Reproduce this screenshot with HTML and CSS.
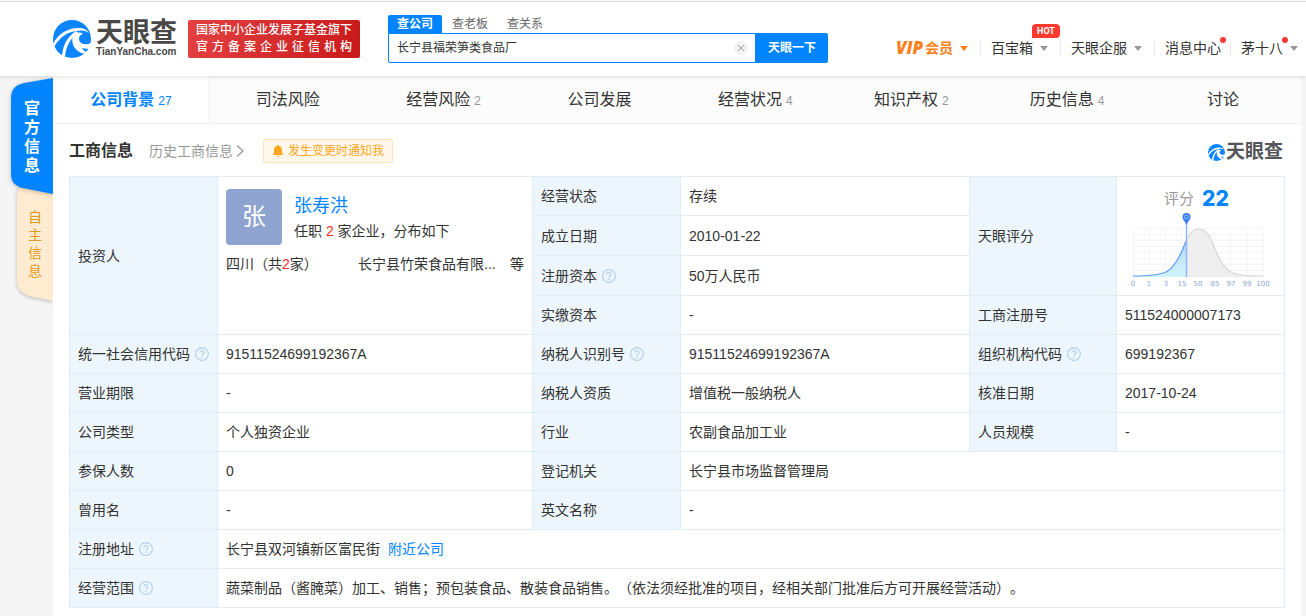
FILE: index.html
```html
<!DOCTYPE html>
<html lang="zh-CN">
<head>
<meta charset="utf-8">
<title>天眼查</title>
<link rel="stylesheet" href="styles.css">
</head>
<body>
<svg class="defs" width="0" height="0" aria-hidden="true">
  <symbol id="swirl" viewBox="0 0 38 38">
    <circle cx="19" cy="19" r="19" fill="#0a84ff"/>
    <path d="M0 24C5 14 14 8 26 8C31 8 34 10 36 13C32 10 28 10 24 11C14 12 7 17 1 27Z" fill="#fff"/>
    <path d="M9 36C10 25 14 17 23 11L25 13C17 19 13 26 12 37Z" fill="#fff"/>
    <path d="M20 15C23 12 27 12 30 14C26 15 25 19 27 22C30 25 35 25 39 22V28C36 29 32 29 29 28C30 30 32 32 35 32L33 34C24 33 17 26 20 15Z" fill="#fff"/>
  </symbol>
  <symbol id="help" viewBox="0 0 14 14">
    <circle cx="7" cy="7" r="6.4" fill="none" stroke="#b0d0ec" stroke-width="1.1"/>
    <path d="M5 5.6C5 3 9 3 9 5.5C9 7 7 7 7 8.6" fill="none" stroke="#b0d0ec" stroke-width="1.1"/>
    <circle cx="7" cy="10.4" r=".8" fill="#b0d0ec"/>
  </symbol>
</svg>

<header class="header">
  <a class="logo" href="#">
    <svg class="logo-mark"><use href="#swirl"/></svg>
    <span class="logo-words"><span class="logo-name">天眼查</span><span class="logo-site">TianYanCha.com</span></span>
  </a>
  <div class="cert"><p>国家中小企业发展子基金旗下</p><p class="cert-wide">官方备案企业征信机构</p></div>
  <form class="search">
    <div class="search-tabs">
      <button type="button" class="search-tab active">查公司</button>
      <button type="button" class="search-tab">查老板</button>
      <button type="button" class="search-tab">查关系</button>
    </div>
    <div class="search-row">
      <input class="search-input" type="text" aria-label="搜索" value="长宁县福荣笋类食品厂">
      <button type="button" class="search-clear" aria-label="清空"><svg viewBox="0 0 14 14"><circle cx="7" cy="7" r="7" fill="#f2f2f2"/><path d="M4 4l6 6M10 4l-6 6" stroke="#999"/></svg></button>
      <button type="submit" class="search-go">天眼一下</button>
    </div>
  </form>
  <nav class="nav">
    <a class="nav-item vip" href="#"><span class="vip-word">VIP</span>会员<i class="caret"></i></a>
    <a class="nav-item" href="#">百宝箱<i class="caret"></i><span class="hot">HOT</span></a>
    <a class="nav-item" href="#">天眼企服<i class="caret"></i></a>
    <a class="nav-item plain" href="#"><span class="dotted">消息中心</span></a>
    <a class="nav-item" href="#"><span class="dotted">茅十八</span><i class="caret"></i></a>
  </nav>
</header>

<div class="page">
  <aside class="side">
    <button class="side-tab official">
      <svg viewBox="0 0 42 116" preserveAspectRatio="none"><path d="M42 0L13 5C4 7 0 12 0 20V96C0 104 4 108 12 110L42 116Z" fill="#0084ff"/></svg>
      <span>官方信息</span>
    </button>
    <button class="side-tab own">
      <svg viewBox="0 0 36 120" preserveAspectRatio="none"><path d="M36 0H9C3 3 0 8 0 15V98C0 106 4 111 12 114L36 119Z" fill="#ffebcf"/></svg>
      <span>自主信息</span>
    </button>
  </aside>

  <main class="panel">
    <nav class="tabs">
      <a class="tab active" href="#">公司背景<small>27</small></a>
      <a class="tab" href="#">司法风险</a>
      <a class="tab" href="#">经营风险<small>2</small></a>
      <a class="tab" href="#">公司发展</a>
      <a class="tab" href="#">经营状况<small>4</small></a>
      <a class="tab" href="#">知识产权<small>2</small></a>
      <a class="tab" href="#">历史信息<small>4</small></a>
      <a class="tab" href="#">讨论</a>
    </nav>

    <section class="content">
      <div class="section-head">
        <h2>工商信息</h2>
        <a class="history" href="#">历史工商信息<svg viewBox="0 0 8 12"><path d="M1 0.5L7 6L1 11.5" fill="none" stroke="#999" stroke-width="1.3"/></svg></a>
        <button class="notify"><svg viewBox="0 0 12 12"><path d="M6 0C6.800 0 7 .5 7 1C9.200 1.500 10 3.200 10 5V8L11 9.500V10H1V9.500L2 8V5C2 3.200 2.800 1.500 5 1C5 .5 5.200 0 6 0ZM4.500 10.700H7.500C7.300 12.300 4.700 12.300 4.500 10.700Z" fill="#ffa51f"/></svg>发生变更时通知我</button>
        <div class="brand"><svg><use href="#swirl"/></svg><span>天眼查</span></div>
      </div>

      <table class="info">
        <colgroup><col class="c-label"><col class="c-first"><col class="c-label"><col><col class="c-third"><col class="c-last"></colgroup>
        <tr>
          <th rowspan="4">投资人</th>
          <td rowspan="4" class="investor">
            <div class="person">
              <div class="avatar">张</div>
              <div><a class="person-name" href="#">张寿洪</a><p>任职 <em>2</em> 家企业，分布如下</p></div>
            </div>
            <div class="firms"><span>四川（共<em>2</em>家）</span><span>长宁县竹荣食品有限...</span><span>等</span></div>
          </td>
          <th>经营状态</th><td>存续</td>
          <th rowspan="3">天眼评分</th>
          <td rowspan="3" class="score">
            <div class="score-head">评分<strong>22</strong></div>
            <svg class="chart" viewBox="0 0 144 78">
              <defs><linearGradient id="fill" x1="0" y1="0" x2="0" y2="1"><stop offset="0" stop-color="#b5d8fb"/><stop offset="1" stop-color="#d2f4fb"/></linearGradient></defs>
              <path d="M4 17.500H134M4 23.500H134M4 29.500H134M4 35.500H134M4 41.500H134M4 47.500H134M4 53.500H134M4 59.500H134M4.500 17V66M20.500 17V66M36.500 17V66M52.500 17V66M69.500 17V66M85.500 17V66M101.500 17V66M118.500 17V66M134.500 17V66" stroke="#f5f5f5" fill="none"/>
              <path d="M57 30C61 21 65 18 70 18C79 18 82 28 86 38C90 48 95 57 102 61C109 64.500 120 65 134 65V66H57Z" fill="#eee"/>
              <path d="M4 65C20 65 30 64 37 61C47 56 53 41 57 30V66H4Z" fill="url(#fill)"/>
              <path d="M57 30C61 21 65 18 70 18C79 18 82 28 86 38C90 48 95 57 102 61C109 64.500 120 65 134 65" fill="none" stroke="#d8d8d8" stroke-width="1.200"/>
              <path d="M4 65C20 65 30 64 37 61C47 56 53 41 57 30" fill="none" stroke="#5b9dfb" stroke-width="1.200"/>
              <path d="M57.500 12V66" stroke="#8cb4ff" stroke-width="1.400"/>
              <path d="M57.500 14C56 10 53.500 9 53.500 6A4 4 0 0 1 61.500 6C61.500 9 59 10 57.500 14Z" fill="#3f7bf5"/>
              <circle cx="57.500" cy="6" r="2" fill="#3f7bf5" stroke="#8fd0ff" stroke-width=".8"/>
              <g class="axis"><text x="4" y="75">0</text><text x="20" y="75">1</text><text x="37" y="75">3</text><text x="53" y="75">15</text><text x="69" y="75">50</text><text x="86" y="75">85</text><text x="102" y="75">97</text><text x="118" y="75">99</text><text x="134" y="75">100</text></g>
            </svg>
          </td>
        </tr>
        <tr class="tall"><th>成立日期</th><td>2010-01-22</td></tr>
        <tr class="tall"><th>注册资本<svg class="help"><use href="#help"/></svg></th><td>50万人民币</td></tr>
        <tr><th>实缴资本</th><td>-</td><th>工商注册号</th><td>511524000007173</td></tr>
        <tr><th>统一社会信用代码<svg class="help"><use href="#help"/></svg></th><td>91511524699192367A</td><th>纳税人识别号<svg class="help"><use href="#help"/></svg></th><td>91511524699192367A</td><th>组织机构代码<svg class="help"><use href="#help"/></svg></th><td>699192367</td></tr>
        <tr><th>营业期限</th><td>-</td><th>纳税人资质</th><td>增值税一般纳税人</td><th>核准日期</th><td>2017-10-24</td></tr>
        <tr><th>公司类型</th><td>个人独资企业</td><th>行业</th><td>农副食品加工业</td><th>人员规模</th><td>-</td></tr>
        <tr><th>参保人数</th><td>0</td><th>登记机关</th><td colspan="3">长宁县市场监督管理局</td></tr>
        <tr><th>曾用名</th><td>-</td><th>英文名称</th><td colspan="3">-</td></tr>
        <tr><th>注册地址<svg class="help"><use href="#help"/></svg></th><td colspan="5">长宁县双河镇新区富民街<a class="nearby" href="#">附近公司</a></td></tr>
        <tr><th>经营范围<svg class="help"><use href="#help"/></svg></th><td colspan="5">蔬菜制品（酱腌菜）加工、销售；预包装食品、散装食品销售。（依法须经批准的项目，经相关部门批准后方可开展经营活动）。</td></tr>
      </table>
    </section>
  </main>
</div>
</body>
</html>
```
FILE: styles.css
```css
* { box-sizing: border-box; }

body {
  margin: 0;
  min-height: 100vh;
  display: flex;
  flex-direction: column;
  background: #f5f5f5;
  color: #333;
  font: 14px/20px "Liberation Sans", "Noto Sans CJK SC", sans-serif;
  text-spacing-trim: space-all;
}

h2, p { margin: 0; }
a { color: inherit; text-decoration: none; }
em { font-style: normal; color: #ff2c2c; }
button { border: 0; padding: 0; background: none; font: inherit; color: inherit; cursor: pointer; }
.defs { position: absolute; }

/* Header */
.header {
  position: relative;
  z-index: 2;
  display: flex;
  height: 75px;
  margin-top: 1px;
  padding: 0 8px 0 53px;
  border-top: 1px solid #dadcdb;
  background: #fff;
  box-shadow: 0 1px 4px rgba(0, 0, 0, .12);
}
body::before { content: ""; position: absolute; width: 100%; height: 1px; background: #fff; }

.logo { display: flex; gap: 5px; padding-top: 18px; }
.logo-mark { width: 38px; height: 38px; }
.logo-words { display: flex; flex-direction: column; color: #4a4747; }
.logo-name { font-size: 27px; font-weight: 700; line-height: 26px; }
.logo-site { font-size: 10px; font-weight: 700; line-height: 12px; }

.cert {
  width: 172px;
  height: 38px;
  margin: 18px 28px 0 11px;
  padding: 2px 8px;
  border-radius: 2px;
  background: linear-gradient(100deg, #e44040, #c91a1b);
  color: #fff;
  font-size: 12px;
  font-weight: 500;
  line-height: 17px;
  white-space: nowrap;
}
.cert-wide { text-align-last: justify; }

.search { width: 440px; padding-top: 13px; font-size: 12px; }
.search-tabs { display: flex; gap: 1px; }
.search-tab { height: 18px; padding: 0 9px; color: #666; line-height: 18px; }
.search-tab.active { border-radius: 2px 2px 0 0; background: #0084ff; color: #fff; font-weight: 700; }
.search-row { position: relative; display: flex; height: 30px; }
.search-input {
  flex: 1;
  min-width: 0;
  padding: 0 32px 0 8px;
  border: 1px solid #0084ff;
  border-radius: 0 0 0 2px;
  font: inherit;
  color: #333;
}
.search-clear { position: absolute; right: 80px; top: 8px; width: 14px; height: 14px; }
.search-clear svg { display: block; }
.search-go { width: 72px; border-radius: 0 2px 2px 0; background: #0084ff; color: #fff; font-weight: 700; }

.nav { display: flex; margin: 39px 0 0 auto; height: 14px; line-height: 14px; white-space: nowrap; }
.nav-item { position: relative; display: flex; align-items: center; padding: 0 12px 0 10px; border-left: 1px solid #e8e8e8; }
.nav-item:first-child { border-left: 0; }
.nav-item:last-child { padding-right: 0; }
.nav-item.plain { padding-right: 9px; }
.caret { margin-left: 7px; border: 4px solid transparent; border-top: 5px solid #999; border-bottom: 0; }
.vip { color: #ff7f1a; font-weight: 700; }
.vip .caret { border-top-color: #ff7f1a; }
.vip-word { margin-right: 2px; font: italic 800 17px/14px "Open Sans", sans-serif; }
.hot {
  position: absolute;
  right: 0;
  top: -17px;
  width: 28px;
  border-radius: 4px 4px 4px 0;
  background: #ff3b30;
  color: #fff;
  font: 700 9px/14px Roboto, sans-serif;
  text-align: center;
}
.dotted { position: relative; }
.dotted::after {
  content: "";
  position: absolute;
  left: 100%;
  top: -4px;
  width: 6px;
  height: 6px;
  margin-left: -1px;
  border-radius: 50%;
  background: #ff3b30;
}

/* Page */
.page { flex: 1; display: flex; padding-right: 5px; }

.side { width: 53px; flex: none; display: flex; flex-direction: column; align-items: flex-end; padding-top: 2px; overflow: hidden; }
.side-tab { position: relative; display: flex; justify-content: center; }
.side-tab svg { position: absolute; inset: 0; width: 100%; height: 100%; filter: drop-shadow(0 1px 2px rgba(0, 0, 0, .25)); }
.side-tab span { position: relative; }
.official { z-index: 1; width: 42px; height: 116px; padding-top: 21px; align-items: flex-start; color: #fff; font-size: 16px; font-weight: 700; line-height: 19px; }
.official span { width: 16px; }
.own { width: 36px; height: 120px; margin-top: -12px; padding-top: 26px; align-items: flex-start; color: #e09b26; line-height: 18px; }
.own span { width: 14px; }

.panel { flex: 1; min-width: 0; background: #fff; }
.tabs { display: flex; }
.tab {
  flex: 1;
  display: flex;
  justify-content: center;
  align-items: center;
  height: 48px;
  border-bottom: 1px solid #f0f0f0;
  background: #fcfcfc;
  font-size: 16px;
}
.tab small { margin: 2px 0 0 4px; font-size: 12px; color: #999; }
.tab.active { border-right: 1px solid #f0f0f0; background: #fff; color: #0084ff; font-weight: 700; }
.tab.active small { color: #0084ff; font-weight: 400; }

.content { padding: 15px 16px 8px; }
.section-head { display: flex; align-items: center; height: 24px; margin-bottom: 13px; }
.section-head h2 { font-size: 16px; }
.history { display: flex; align-items: center; gap: 3px; margin-left: 16px; color: #999; }
.history svg { width: 8px; height: 12px; }
.notify {
  display: flex;
  align-items: center;
  gap: 4px;
  height: 24px;
  margin-left: 19px;
  padding: 0 8px;
  border: 1px solid #ffe6bf;
  border-radius: 2px;
  background: #fff7ea;
  color: #ffa51f;
  font-size: 12px;
}
.notify svg { width: 12px; height: 12px; }
.brand { display: flex; align-items: center; gap: 1px; margin: 2px 2px 0 auto; color: #55565a; font-size: 19px; font-weight: 700; }
.brand svg { width: 17px; height: 17px; }

/* Company table */
.info { width: 100%; table-layout: fixed; border-collapse: collapse; }
.c-label { width: 148px; }
.c-first { width: 315px; }
.c-third { width: 147px; }
.c-last { width: 168px; }
.info tr { height: 39px; }
.info tr.tall { height: 40px; }
.info th, .info td { padding: 0 8px; border: 1px solid #e1edf6; text-align: left; font-weight: 400; }
.info th { background: #eef6fd; }
.help { width: 14px; height: 14px; margin-left: 5px; vertical-align: -2px; }
.nearby { margin-left: 8px; color: #0084ff; }

.info .investor { padding-top: 12px; vertical-align: top; }
.person { display: flex; gap: 12px; }
.avatar { width: 56px; height: 56px; border-radius: 4px; background: #8ea3cf; color: #fff; font-size: 24px; line-height: 56px; text-align: center; }
.person-name { display: block; margin: 5px 0 3px; color: #0084ff; font-size: 18px; line-height: 24px; }
.firms { display: grid; grid-template-columns: 132px 1fr auto; margin-top: 9px; white-space: nowrap; }

.info .score { padding: 3px 0 0; text-align: center; }
.score-head { display: flex; justify-content: center; align-items: center; gap: 8px; height: 24px; margin-left: -8px; color: #999; font-size: 15px; }
.score-head strong { color: #0084ff; font: 800 21px/24px Inter, sans-serif; }
.chart { display: block; width: 144px; height: 78px; margin: 0 auto; }
.axis { fill: #8da6d6; font: 7px "DejaVu Sans", sans-serif; text-anchor: middle; }
```
